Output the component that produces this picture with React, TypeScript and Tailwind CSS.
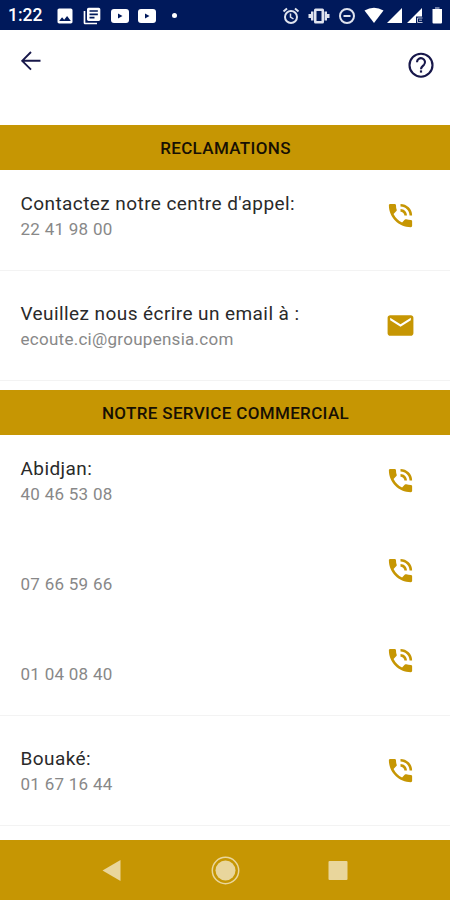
import React from "react";
import { MdEmail, MdImage, MdLibraryBooks, MdPhoneInTalk } from "react-icons/md";

const PlayIcon = ({ className }: { className?: string }) => (
  <svg viewBox="0 0 18 14" className={`h-[14px] w-[18px] ${className ?? ""}`}>
    <rect width="18" height="14" rx="3" fill="#fff" />
    <path d="M7 4.500v5l4.500-2.500z" fill="#00195b" />
  </svg>
);

const AlarmIcon = () => (
  <svg
    viewBox="0 0 18 18"
    className="size-[18px]"
    fill="none"
    stroke="currentColor"
    strokeWidth="2"
  >
    <circle cx="9" cy="10" r="6" />
    <path d="M1.500 4.500l3.500-3M16.500 4.500l-3.500-3" />
    <path d="M8.500 6.500v3.500l3 2" strokeWidth="1.500" />
  </svg>
);

const VibrateIcon = () => (
  <svg viewBox="0 0 22 18" className="ml-[8px] h-[18px] w-[22px]" fill="currentColor">
    <path
      fillRule="evenodd"
      d="M7.500 1.500h7A1.500 1.500 0 0 1 16 3v12a1.500 1.500 0 0 1-1.500 1.500h-7A1.500 1.500 0 0 1 6 15V3a1.500 1.500 0 0 1 1.500-1.500zM8.500 4v10h5V4z"
    />
    <path d="M3 4.500h2.500v9H3zM.500 7H3v4H.500zM16.500 4.500H19v9h-2.500zM19 7h2.500v4H19z" />
  </svg>
);

const DoNotDisturbIcon = () => (
  <svg
    viewBox="0 0 18 18"
    className="ml-[8px] size-[18px]"
    fill="none"
    stroke="currentColor"
    strokeWidth="2"
  >
    <circle cx="9" cy="9" r="7" />
    <path d="M5.500 9h7" />
  </svg>
);

const SignalIcons = () => (
  <svg viewBox="0 0 88 30" className="h-[30px] w-[88px]" fill="#fff">
    <path d="M2.500 10.500Q12 5 21.500 10.500L12 23z" />
    <path d="M25 23L40 8v15z" />
    <path d="M45 23L60 8v8.500h-6V23z" />
    <path d="M55.500 18h5M55.500 18v4.500h5M57 20.200h3" stroke="#b9c0d5" fill="none" />
    <path d="M73 7h4.500v2H73z" fill="#6f7ea8" />
    <path d="M70.500 9h9.500v13.500a1 1 0 0 1-1 1h-7.500a1 1 0 0 1-1-1z" />
  </svg>
);

const StatusBar = () => (
  <div className="flex h-[30px] items-center justify-between bg-[#00195b] text-white">
    <div className="flex items-center pl-[8px] pt-px">
      <span className="w-[37px] text-[17.500px] font-medium leading-none">1:22</span>
      <MdImage className="ml-[10px] size-[20px]" />
      <MdLibraryBooks className="ml-[7px] size-[20px]" />
      <PlayIcon className="ml-[9px]" />
      <PlayIcon className="ml-[9px]" />
      <span className="ml-[16px] size-[5px] rounded-full bg-white" />
    </div>
    <div className="flex items-center">
      <div className="flex items-center pr-[6px] pt-px text-[#dfe3ee]">
        <AlarmIcon />
        <VibrateIcon />
        <DoNotDisturbIcon />
      </div>
      <SignalIcons />
    </div>
  </div>
);

const Header = () => (
  <header className="flex h-[95px] items-start justify-between pl-[21px] pr-[16.500px] text-[#17174a]">
    <svg
      viewBox="0 0 20 20"
      className="mt-[21px] size-[20px]"
      fill="none"
      stroke="currentColor"
      strokeWidth="1.900"
    >
      <path d="M19.500 9.800H1.500M10 1L1.200 9.800l8.800 8.800" />
    </svg>
    <svg
      viewBox="0 0 26 26"
      className="mt-[22px] size-[26px]"
      fill="none"
      stroke="currentColor"
      strokeWidth="2.100"
    >
      <circle cx="13" cy="13.200" r="11.500" />
      <path d="M9 10.200a4 4 0 1 1 6.900 2.700c-1.600 1.500-2.900 2.200-2.900 4.300" />
      <path d="M11.900 19.500h2.200" strokeWidth="2.200" />
    </svg>
  </header>
);

const SectionTitle = ({ children }: { children: React.ReactNode }) => (
  <h2 className="flex h-[45px] items-center justify-center bg-[#c69603] pl-px pt-[2px] text-[17px] font-medium tracking-[0.350px] text-[#171003]">
    {children}
  </h2>
);

type RowProps = {
  title?: string;
  value: string;
  email?: boolean;
};

const ContactRow = ({ title, value, email }: RowProps) => {
  const Icon = email ? MdEmail : MdPhoneInTalk;
  return (
    <div className="flex h-[90px] items-center justify-between pl-[20.500px] pr-[34px]">
      <div className="pt-[3px]">
        <p className="h-[26px] text-[19px] leading-[26px] tracking-[0.420px] text-[#2a2a2a]">
          {title}
        </p>
        <p className="text-[17px] leading-[25px] tracking-[0.270px] text-[#888]">{value}</p>
      </div>
      <Icon className="size-[31px] text-[#c69603]" />
    </div>
  );
};

const Divider = () => <div className="my-[9.500px] h-px bg-[#f3f3f3]" />;

const NavBar = () => (
  <nav className="flex h-[60px] items-center justify-center bg-[#c69603]">
    <svg viewBox="0 0 450 60" className="h-[60px] w-[450px]" fill="#e9d69c">
      <path d="M102.500 30.500L120.500 20v21z" />
      <circle cx="225.500" cy="30.500" r="10" />
      <circle cx="225.500" cy="30.500" r="13.200" fill="none" stroke="#e9d69c" strokeWidth="1.500" />
      <rect x="328.500" y="21" width="19" height="19" rx="1" />
    </svg>
  </nav>
);

const App = () => {
  return (
    <div className="flex h-[900px] w-[450px] flex-col overflow-hidden bg-white font-['Roboto',sans-serif]">
      <StatusBar />
      <Header />
      <main className="h-[715px] overflow-hidden">
        <SectionTitle>RECLAMATIONS</SectionTitle>
        <ContactRow title="Contactez notre centre d'appel:" value="22 41 98 00" />
        <Divider />
        <ContactRow
          title="Veuillez nous écrire un email à :"
          value="ecoute.ci@groupensia.com"
          email
        />
        <Divider />
        <SectionTitle>NOTRE SERVICE COMMERCIAL</SectionTitle>
        <ContactRow title="Abidjan:" value="40 46 53 08" />
        <ContactRow value="07 66 59 66" />
        <ContactRow value="01 04 08 40" />
        <Divider />
        <ContactRow title="Bouaké:" value="01 67 16 44" />
        <Divider />
      </main>
      <NavBar />
    </div>
  );
};

export default App;
